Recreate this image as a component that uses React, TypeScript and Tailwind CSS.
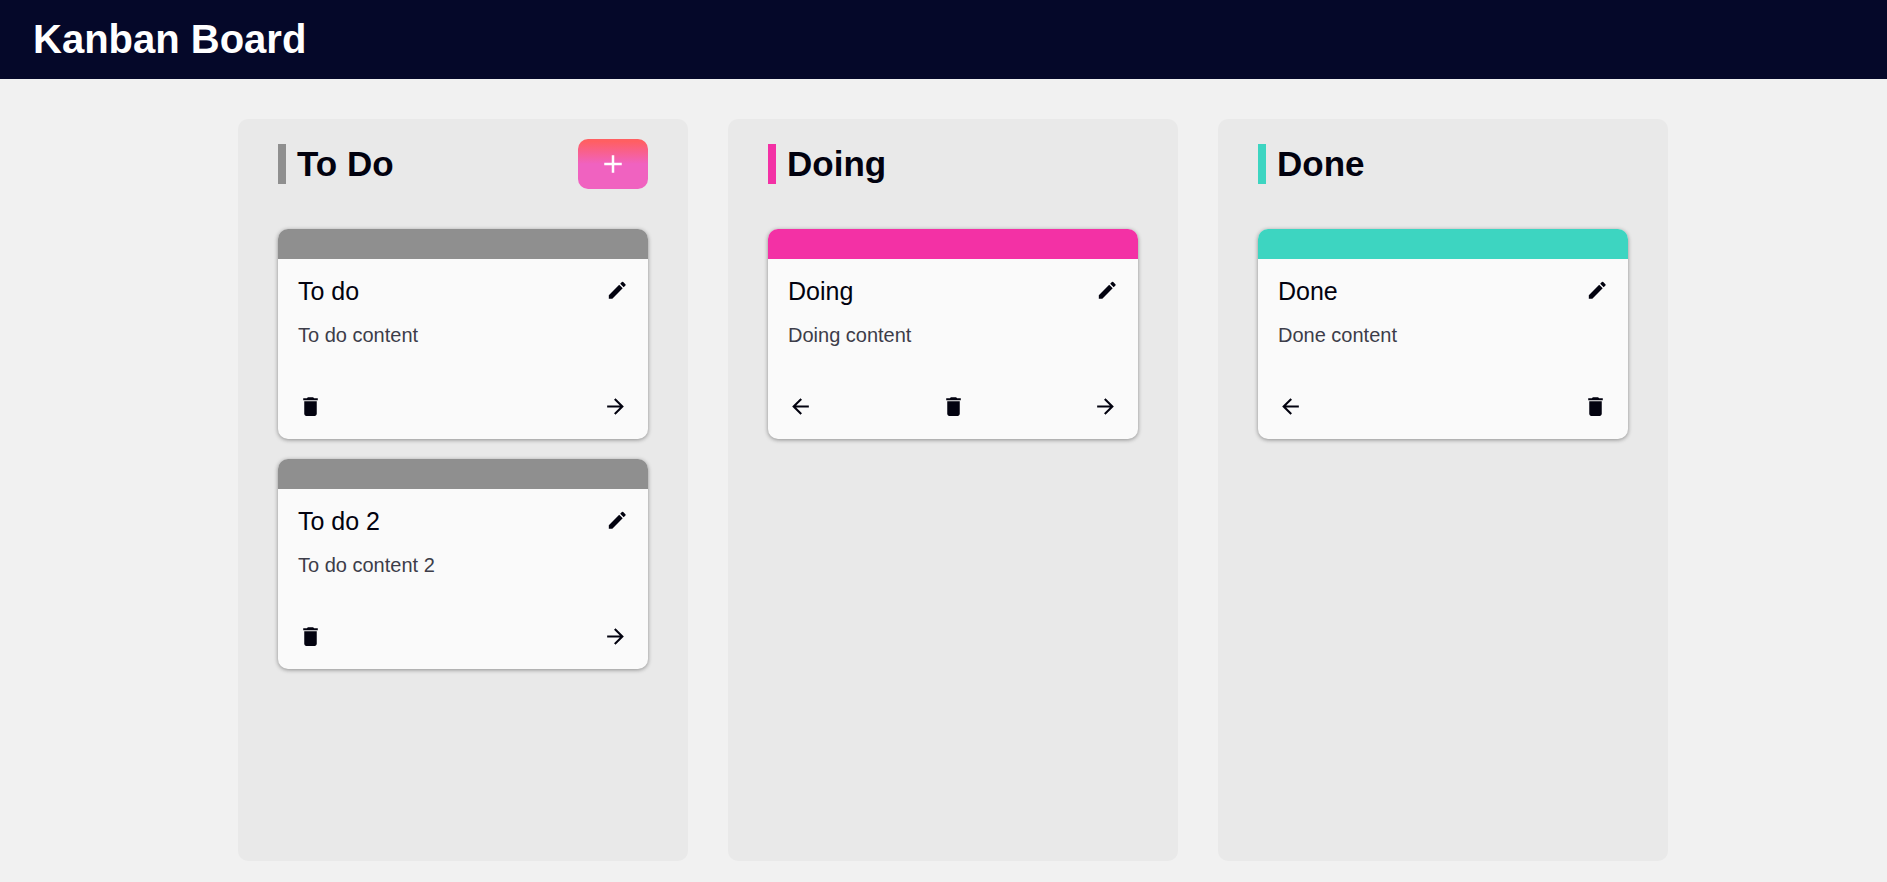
import { MdAdd, MdArrowBack, MdArrowForward, MdDelete, MdEdit } from "react-icons/md";

type Card = { title: string; content: string };
type Column = { name: string; color: string; cards: Card[]; canAdd?: boolean; back?: boolean; forward?: boolean };

const columns: Column[] = [
  {
    name: "To Do",
    color: "bg-[#8f8f8f]",
    cards: [
      { title: "To do", content: "To do content" },
      { title: "To do 2", content: "To do content 2" },
    ],
    canAdd: true,
    forward: true,
  },
  {
    name: "Doing",
    color: "bg-[#f331a5]",
    cards: [{ title: "Doing", content: "Doing content" }],
    back: true,
    forward: true,
  },
  {
    name: "Done",
    color: "bg-[#3dd5c1]",
    cards: [{ title: "Done", content: "Done content" }],
    back: true,
  },
];

function TaskCard({ card, column }: { card: Card; column: Column }) {
  return (
    <article className="flex h-[210px] flex-col overflow-hidden rounded-[10px] bg-[#fafafa] shadow-[0_1px_4px_rgba(0,0,0,0.4)]">
      <div className={`h-[30px] shrink-0 ${column.color}`} />
      <div className="flex flex-1 flex-col p-5">
        <div className="flex h-6 items-center justify-between">
          <h3 className="text-[25px] leading-6">{card.title}</h3>
          <button aria-label="Edit" className="pb-px">
            <MdEdit className="size-[22.5px]" />
          </button>
        </div>
        <p className="mt-[9px] text-xl leading-[46px] text-[#3d3d49]">{card.content}</p>
        <div className="mt-auto flex items-center justify-between">
          {column.back && (
            <button aria-label="Move back">
              <MdArrowBack size={25} />
            </button>
          )}
          <button aria-label="Delete">
            <MdDelete size={25} />
          </button>
          {column.forward && (
            <button aria-label="Move forward">
              <MdArrowForward size={25} />
            </button>
          )}
        </div>
      </div>
    </article>
  );
}

export default function App() {
  return (
    <div className="flex h-[882px] flex-col overflow-hidden bg-[#f1f1f1] font-['Liberation_Sans',Arial,sans-serif] text-[#02020f]">
      <header className="flex h-[79px] shrink-0 items-center bg-[#050829] pb-0.5 pl-[33px]">
        <h1 className="text-[40px] font-bold leading-none text-white">Kanban Board</h1>
      </header>
      <main className="flex gap-10 pl-[238px] pt-10">
        {columns.map((column) => (
          <section key={column.name} className="h-[742px] w-[450px] shrink-0 rounded-[10px] bg-[#e9e9e9] px-10 pt-5">
            <div className="flex h-[50px] items-center justify-between">
              <div className="flex items-center gap-[11px]">
                <span className={`h-10 w-2 ${column.color}`} />
                <h2 className="text-[35px] font-bold leading-10">{column.name}</h2>
              </div>
              {column.canAdd && (
                <button
                  aria-label="Add task"
                  className="flex h-[50px] w-[70px] items-center justify-center rounded-[10px] bg-[linear-gradient(180deg,#ff5f62_5%,#f062c0_50%)] text-white"
                >
                  <MdAdd size={30} />
                </button>
              )}
            </div>
            <div className="mt-10 flex flex-col gap-5">
              {column.cards.map((card) => (
                <TaskCard key={card.title} card={card} column={column} />
              ))}
            </div>
          </section>
        ))}
      </main>
    </div>
  );
}
